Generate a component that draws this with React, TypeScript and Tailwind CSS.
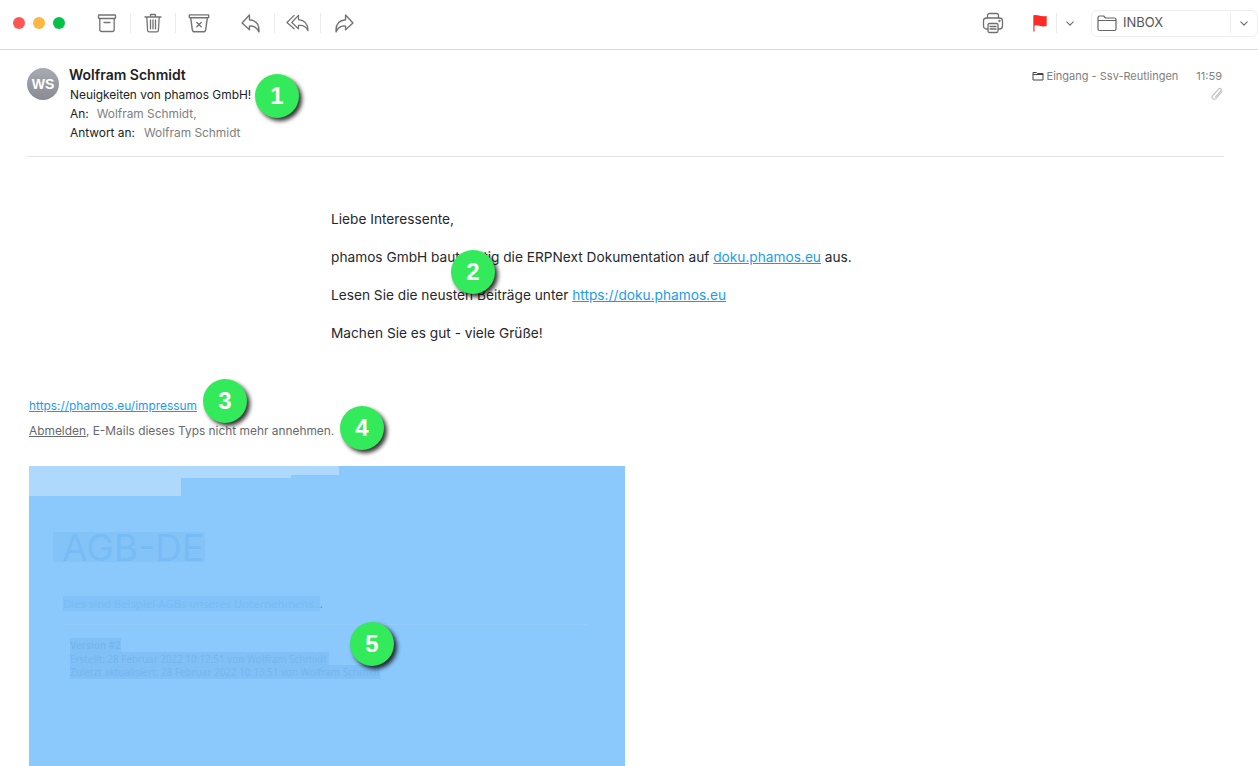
import { ReactNode } from 'react'

function Badge({ n, className }: { n: number; className: string }) {
  return (
    <div className={`absolute w-11 h-11 rounded-full bg-[#33ea5a] text-white font-bold text-[24px] flex items-center justify-center shadow-[3px_3px_4px_rgba(0,0,0,0.8)] font-['Liberation_Sans',sans-serif] ${className}`}>
      {n}
    </div>
  )
}

function ToolIcon({ children, className = 'w-6 h-6', box = '0 0 24 24' }: { children: ReactNode; className?: string; box?: string }) {
  return (
    <svg viewBox={box} fill="none" stroke="#737373" strokeWidth="1.3" strokeLinecap="round" strokeLinejoin="round" className={className}>
      {children}
    </svg>
  )
}

function Divider() {
  return <div className="w-px h-5 bg-[#ececec]" />
}

function Toolbar() {
  return (
    <div className="h-[50px] pb-[3px] border-b border-[#d9d9d9] flex items-center shrink-0">
      <div className="flex gap-2 ml-[13px]">
        <div className="w-3 h-3 rounded-full bg-[#fc5753]" />
        <div className="w-3 h-3 rounded-full bg-[#fdb73e]" />
        <div className="w-3 h-3 rounded-full bg-[#06c149]" />
      </div>
      <div className="flex items-center ml-[30px]">
        <ToolIcon>
          <rect x="3.5" y="4" width="17" height="3.5" rx="0.5" />
          <path d="M4.8 7.5v11a2 2 0 0 0 2 2h10.4a2 2 0 0 0 2-2v-11M9 11.5h6" />
        </ToolIcon>
        <div className="w-[11px]" />
        <Divider />
        <div className="w-[10px]" />
        <ToolIcon>
          <path d="M4 6h16M9.5 6V3.5h5V6M5.8 6l.8 13.5a1.5 1.5 0 0 0 1.5 1.3h7.8a1.5 1.5 0 0 0 1.5-1.3L18.2 6M9.5 9v8.8M12 9v8.8M14.5 9v8.8" />
        </ToolIcon>
        <div className="w-[10px]" />
        <Divider />
        <div className="w-[10px]" />
        <ToolIcon className="w-[26px] h-[26px]">
          <rect x="3" y="4.5" width="18" height="2.6" rx="0.6" />
          <path d="M4.3 7.1l1.5 11a2.2 2.2 0 0 0 2.2 2h8a2.2 2.2 0 0 0 2.2-2l1.5-11M10 11.5l4 4M14 11.5l-4 4" />
        </ToolIcon>
        <div className="w-[29px]" />
        <ToolIcon box="0 0 18 18" className="w-[19px] h-[19px]">
          <path d="M8 1L1 8.5 8 15v-3.5c4-.5 7 1 9 5.5.5-7-3-11-9-11.5z" />
        </ToolIcon>
        <div className="w-[14px]" />
        <Divider />
        <div className="w-[11px]" />
        <ToolIcon box="0 0 24 18" className="w-[23px] h-[18px]">
          <path d="M13 1L6 8.5 13 15v-3.5c4-.5 8 1 10 5.5 0-7-4-11-10-11.5z" />
          <path d="M8.5 1L1 8.5 8.5 15" />
        </ToolIcon>
        <div className="w-[11px]" />
        <Divider />
        <div className="w-[14px]" />
        <ToolIcon box="0 0 18 18" className="w-[19px] h-[19px]">
          <path d="M10 1l7 7.5L10 15v-3.5c-4-.5-7 1-9 5.5-.5-7 3-11 9-11.5z" />
        </ToolIcon>
      </div>

      <div className="flex items-center ml-auto">
        <svg viewBox="0 0 24 24" fill="none" stroke="#6f6f6f" strokeWidth="1.3" strokeLinecap="round" strokeLinejoin="round" className="w-6 h-6">
          <path d="M6.5 7V4.5a2 2 0 0 1 2-2h7a2 2 0 0 1 2 2V7" />
          <rect x="2.5" y="7" width="19" height="11" rx="3" />
          <rect x="7" y="12.5" width="10" height="9" rx="1.5" fill="#fff" />
          <path d="M9 15.5h6M9 18h6" />
          <circle cx="18.5" cy="10" r="0.5" />
        </svg>
        <svg viewBox="0 0 18 20" className="w-4 h-[18px] ml-[27px]">
          <path d="M1.5 1.5C6 0 9 3.5 16.5 2v11.5C10 15 6 11.5 2.8 13v6.5H1.5z" fill="#fb2a26" />
        </svg>
        <div className="w-2" />
        <Divider />
        <svg viewBox="0 0 10 6" fill="none" stroke="#666" strokeWidth="1.3" strokeLinecap="round" strokeLinejoin="round" className="w-2 h-[5px] ml-[9px]">
          <path d="M1 1l4 4 4-4" />
        </svg>
        <div className="ml-[17px] w-[167px] h-[27px] rounded-md border border-[#efefef] flex items-center">
          <svg viewBox="0 0 20 18" fill="none" stroke="#666" strokeWidth="1.2" strokeLinejoin="round" className="w-5 h-[18px] ml-[5px]">
            <path d="M1 15V3.5A1.5 1.5 0 0 1 2.5 2h4.2l1.8 2h9A1.5 1.5 0 0 1 19 5.5V15a1.5 1.5 0 0 1-1.5 1.5h-15A1.5 1.5 0 0 1 1 15zM1 6.5h18" />
          </svg>
          <span className="ml-[6px] text-[13px] text-[#555]">INBOX</span>
          <div className="ml-auto w-px h-5 bg-[#ececec]" />
          <svg viewBox="0 0 10 6" fill="none" stroke="#666" strokeWidth="1.3" strokeLinecap="round" strokeLinejoin="round" className="w-2 h-[5px] mx-[9px]">
            <path d="M1 1l4 4 4-4" />
          </svg>
        </div>
      </div>
    </div>
  )
}

function MailHeader() {
  return (
    <div className="relative ml-[27px] mr-[34px] h-[107px] border-b border-[#e4e4e4] flex">
      <div className="w-8 h-8 mt-[18px] rounded-full bg-gradient-to-b from-[#a8abb3] to-[#888b94] text-white font-bold text-[14px] flex items-center justify-center font-['Liberation_Sans',sans-serif]">
        WS
      </div>
      <div className="ml-[11px] mt-[16px] text-[11.9px]">
        <div className="text-[14px] leading-[18px] font-semibold text-[#222] -ml-px">Wolfram Schmidt</div>
        <div className="leading-[19px] mt-[1px] text-[#222]">Neuigkeiten von phamos GmbH!</div>
        <div className="leading-[19px] text-[#222]">
          An:<span className="ml-2 text-[#808080]">Wolfram Schmidt,</span>
        </div>
        <div className="leading-[19px] text-[#222]">
          Antwort an:<span className="ml-[9px] text-[#808080]">Wolfram Schmidt</span>
        </div>
      </div>
      <div className="ml-auto mt-[18px] pr-[2px] text-[11px] text-[#808080]">
        <div className="flex items-center h-4">
          <svg viewBox="0 0 12 10" fill="none" stroke="#444" strokeWidth="1" className="w-3 h-[10px] mr-[3px]">
            <path d="M1 9V1.5h3.5l1 1H11V9zM1 3.5h10" />
          </svg>
          <span>Eingang - Ssv-Reutlingen</span>
          <span className="ml-[18px]">11:59</span>
        </div>
        <div className="flex justify-end mt-[3px] -mr-[2px]">
          <svg viewBox="0 0 14 14" fill="none" stroke="#bdbdbd" strokeWidth="1.1" strokeLinecap="round" className="w-[14px] h-[14px]">
            <path d="M12 4.5L6 11.5a2.2 2.2 0 0 1-3.4-2.800L8.800 1.800a1.500 1.500 0 0 1 2.300 1.900L5.500 10" />
          </svg>
        </div>
      </div>
    </div>
  )
}

function MailBody() {
  return (
    <div className="ml-[331px] mt-[53px] text-[13.7px] leading-[19px] text-[#26282c] flex flex-col gap-[19px]">
      <p>Liebe Interessente,</p>
      <p>
        phamos GmbH baut stetig die ERPNext Dokumentation auf{' '}
        <a className="text-[#1a9bf0] underline">doku.phamos.eu</a> aus.
      </p>
      <p>
        Lesen Sie die neusten Beiträge unter{' '}
        <a className="text-[#1a9bf0] underline">https://doku.phamos.eu</a>
      </p>
      <p>Machen Sie es gut - viele Grüße!</p>
    </div>
  )
}

function SelectedImage() {
  return (
    <div className="relative w-[596px] h-[300px] bg-[#8bc8fb] mt-[27px] ml-[29px] font-['Noto_Sans',sans-serif] overflow-hidden">
      <div className="absolute left-0 top-0 w-[152px] h-[30px] bg-[#aed8fc]" />
      <div className="absolute left-[152px] top-0 w-[110px] h-3 bg-[#aed8fc]" />
      <div className="absolute left-[262px] top-0 w-[48px] h-[9px] bg-[#aed8fc]" />
      <div className="pt-[66px] pl-[24px]">
        <div className="w-[152px] h-[30px] bg-[#84c3f8] text-[#78bcf6] text-[37px] leading-[32px] pl-[9px] whitespace-nowrap font-['Inter',sans-serif]">
          AGB-DE
        </div>
      </div>
      <div className="pl-[34px] mt-[35px] text-[11.25px] leading-[14px] text-[#78bcf6]">
        <span className="bg-[#82c2f8]">Dies sind Beispiel-AGBs unseres Unternehmens..</span>
        <span className="text-[#5d8fb8]">.</span>
      </div>
      <div className="ml-[34px] mr-[38px] mt-[13px] border-t border-[#94cdfb]" />
      <div className="pl-[41px] mt-[14px] text-[9.9px] leading-[13.5px] text-[#76b6ee]">
        <div><span className="bg-[#80c0f7] font-semibold">Version #2</span></div>
        <div><span className="bg-[#80c0f7] pr-[2px]">Erstellt: 28 Februar 2022 10:12:51 von Wolfram Schmidt</span></div>
        <div><span className="bg-[#80c0f7]">Zuletzt aktualisiert: 28 Februar 2022 10:13:51 von Wolfram Schmidt</span></div>
      </div>
    </div>
  )
}

export default function App() {
  return (
    <div className="relative w-[1258px] h-[766px] bg-white overflow-hidden flex flex-col font-['Inter',sans-serif]">
      <Toolbar />
      <MailHeader />
      <MailBody />
      <div className="ml-[29px] mt-[55px] text-[11.9px] leading-[16px]">
        <a className="text-[#1a9bf0] underline">https://phamos.eu/impressum</a>
      </div>
      <div className="ml-[29px] mt-[9px] text-[11.9px] leading-[16px] text-[#666a70]">
        <a className="underline">Abmelden</a>, E-Mails dieses Typs nicht mehr annehmen.
      </div>
      <SelectedImage />

      <Badge n={1} className="left-[255px] top-[74px]" />
      <Badge n={2} className="left-[451px] top-[250px]" />
      <Badge n={3} className="left-[203px] top-[379px]" />
      <Badge n={4} className="left-[340px] top-[406px]" />
      <Badge n={5} className="left-[350px] top-[622px]" />
    </div>
  )
}
